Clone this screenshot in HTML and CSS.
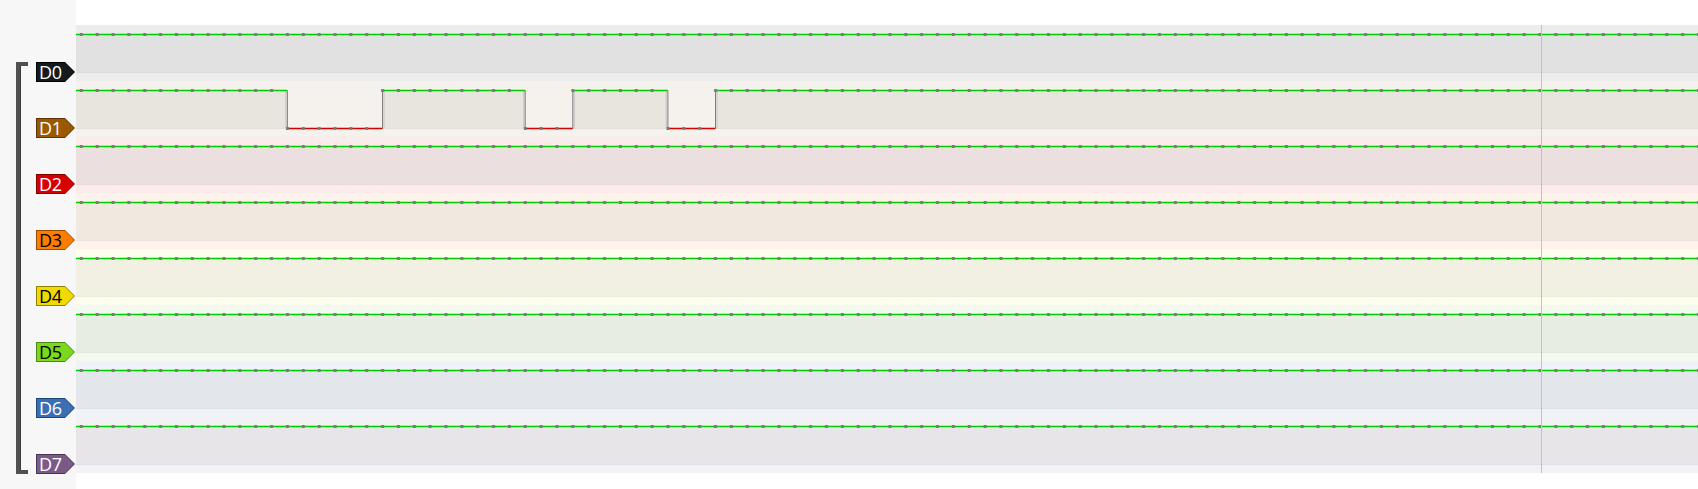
FILE: index.html
```html
<!DOCTYPE html>
<html>
<head>
<meta charset="utf-8">
<link rel="stylesheet" href="styles.css">
</head>
<body>
<svg class="defs" width="0" height="0">
  <defs>
    <pattern id="dots" patternUnits="userSpaceOnUse" x="0" y="0" width="15.855" height="56">
      <rect x="3.8" y="8" width="3" height="3" fill="#7a7a7a"/>
      <rect x="3.8" y="46" width="3" height="3" fill="#7a7a7a"/>
    </pattern>
  </defs>
</svg>
<div class="app">
  <aside class="side">
    <div class="group">
      <div class="bracket"></div>
      <div class="tags">
        <div class="tag t0"><span>D0</span></div>
        <div class="tag t1"><span>D1</span></div>
        <div class="tag t2"><span>D2</span></div>
        <div class="tag t3"><span>D3</span></div>
        <div class="tag t4"><span>D4</span></div>
        <div class="tag t5"><span>D5</span></div>
        <div class="tag t6"><span>D6</span></div>
        <div class="tag t7"><span>D7</span></div>
      </div>
    </div>
  </aside>
  <main class="main">
    <div class="rows">
      <div class="row r0">
        <svg class="wave" width="1622" height="56">
          <rect class="bg" width="1622" height="56"/>
          <rect class="fill" y="10" width="1622" height="37"/>
          <rect class="edge" y="47" width="1622" height="1"/>
          <line class="hi" x1="0" y1="9.5" x2="1622" y2="9.5"/>
          <rect y="8" width="1622" height="3" fill="url(#dots)"/>
        </svg>
      </div>
      <div class="row r1">
        <svg class="wave" width="1622" height="56">
          <rect class="bg" width="1622" height="56"/>
          <rect class="fill" x="0" y="10" width="211.4" height="37"/>
          <rect class="fill" x="306.5" y="10" width="142.7" height="37"/>
          <rect class="fill" x="496.8" y="10" width="95.1" height="37"/>
          <rect class="fill" x="639.5" y="10" width="982.5" height="37"/>
          <rect class="edge" x="0" y="47" width="211.4" height="1"/>
          <rect class="edge" x="306.5" y="47" width="142.7" height="1"/>
          <rect class="edge" x="496.8" y="47" width="95.1" height="1"/>
          <rect class="edge" x="639.5" y="47" width="982.5" height="1"/>
          <line class="shade" x1="209.9" y1="10" x2="209.9" y2="47"/>
          <line class="shade" x1="308" y1="10" x2="308" y2="47"/>
          <line class="shade" x1="447.7" y1="10" x2="447.7" y2="47"/>
          <line class="shade" x1="498.3" y1="10" x2="498.3" y2="47"/>
          <line class="shade" x1="590.4" y1="10" x2="590.4" y2="47"/>
          <line class="shade" x1="641" y1="10" x2="641" y2="47"/>
          <line class="edgeline" x1="211.4" y1="9.5" x2="211.4" y2="47.5"/>
          <line class="edgeline" x1="306.5" y1="9.5" x2="306.5" y2="47.5"/>
          <line class="edgeline" x1="449.2" y1="9.5" x2="449.2" y2="47.5"/>
          <line class="edgeline" x1="496.8" y1="9.5" x2="496.8" y2="47.5"/>
          <line class="edgeline" x1="591.9" y1="9.5" x2="591.9" y2="47.5"/>
          <line class="edgeline" x1="639.5" y1="9.5" x2="639.5" y2="47.5"/>
          <line class="hi" x1="0" y1="9.5" x2="211.4" y2="9.5"/>
          <line class="hi" x1="306.5" y1="9.5" x2="449.2" y2="9.5"/>
          <line class="hi" x1="496.8" y1="9.5" x2="591.9" y2="9.5"/>
          <line class="hi" x1="639.5" y1="9.5" x2="1622" y2="9.5"/>
          <line class="lo" x1="211.4" y1="47.5" x2="306.5" y2="47.5"/>
          <line class="lo" x1="449.2" y1="47.5" x2="496.8" y2="47.5"/>
          <line class="lo" x1="591.9" y1="47.5" x2="639.5" y2="47.5"/>
          <rect x="0" y="8" width="209.4" height="3" fill="url(#dots)"/>
          <rect x="304.5" y="8" width="142.7" height="3" fill="url(#dots)"/>
          <rect x="494.8" y="8" width="95.1" height="3" fill="url(#dots)"/>
          <rect x="637.5" y="8" width="984.5" height="3" fill="url(#dots)"/>
          <rect x="209.4" y="46" width="95.1" height="3" fill="url(#dots)"/>
          <rect x="447.2" y="46" width="47.6" height="3" fill="url(#dots)"/>
          <rect x="589.9" y="46" width="47.6" height="3" fill="url(#dots)"/>
        </svg>
      </div>
      <div class="row r2">
        <svg class="wave" width="1622" height="56">
          <rect class="bg" width="1622" height="56"/>
          <rect class="fill" y="10" width="1622" height="37"/>
          <rect class="edge" y="47" width="1622" height="1"/>
          <line class="hi" x1="0" y1="9.5" x2="1622" y2="9.5"/>
          <rect y="8" width="1622" height="3" fill="url(#dots)"/>
        </svg>
      </div>
      <div class="row r3">
        <svg class="wave" width="1622" height="56">
          <rect class="bg" width="1622" height="56"/>
          <rect class="fill" y="10" width="1622" height="37"/>
          <rect class="edge" y="47" width="1622" height="1"/>
          <line class="hi" x1="0" y1="9.5" x2="1622" y2="9.5"/>
          <rect y="8" width="1622" height="3" fill="url(#dots)"/>
        </svg>
      </div>
      <div class="row r4">
        <svg class="wave" width="1622" height="56">
          <rect class="bg" width="1622" height="56"/>
          <rect class="fill" y="10" width="1622" height="37"/>
          <rect class="edge" y="47" width="1622" height="1"/>
          <line class="hi" x1="0" y1="9.5" x2="1622" y2="9.5"/>
          <rect y="8" width="1622" height="3" fill="url(#dots)"/>
        </svg>
      </div>
      <div class="row r5">
        <svg class="wave" width="1622" height="56">
          <rect class="bg" width="1622" height="56"/>
          <rect class="fill" y="10" width="1622" height="37"/>
          <rect class="edge" y="47" width="1622" height="1"/>
          <line class="hi" x1="0" y1="9.5" x2="1622" y2="9.5"/>
          <rect y="8" width="1622" height="3" fill="url(#dots)"/>
        </svg>
      </div>
      <div class="row r6">
        <svg class="wave" width="1622" height="56">
          <rect class="bg" width="1622" height="56"/>
          <rect class="fill" y="10" width="1622" height="37"/>
          <rect class="edge" y="47" width="1622" height="1"/>
          <line class="hi" x1="0" y1="9.5" x2="1622" y2="9.5"/>
          <rect y="8" width="1622" height="3" fill="url(#dots)"/>
        </svg>
      </div>
      <div class="row r7">
        <svg class="wave" width="1622" height="56">
          <rect class="bg" width="1622" height="56"/>
          <rect class="fill" y="10" width="1622" height="37"/>
          <rect class="edge" y="47" width="1622" height="1"/>
          <line class="hi" x1="0" y1="9.5" x2="1622" y2="9.5"/>
          <rect y="8" width="1622" height="3" fill="url(#dots)"/>
        </svg>
      </div>
      <div class="cursor"></div>
    </div>
  </main>
</div>
</body>
</html>
```

FILE: styles.css
```css
html, body {
  margin: 0;
  padding: 0;
  background: #ffffff;
  width: 1698px;
  height: 489px;
  overflow: hidden;
}

.defs {
  display: block;
  width: 0;
  height: 0;
  overflow: hidden;
}

.app {
  display: flex;
  height: 489px;
}

.side {
  width: 76px;
  flex: none;
  background: #f7f7f7;
  box-sizing: border-box;
  padding: 62px 0 0 16px;
}

.group {
  display: flex;
}

.bracket {
  width: 12px;
  box-sizing: border-box;
  border: 4px solid #505050;
  border-right: 0;
  box-shadow: inset 1px 0 0 #3a3a3a;
}

.tags {
  display: flex;
  flex-direction: column;
  gap: 36px;
  margin-left: 8px;
}

.tag {
  width: 39px;
  height: 20px;
  box-sizing: border-box;
  padding: 1px;
  clip-path: polygon(0 0, 29px 0, 39px 10px, 29px 20px, 0 20px);
}

.tag span {
  display: block;
  height: 18px;
  box-sizing: border-box;
  padding-left: 2px;
  clip-path: polygon(0 0, 28px 0, 37px 9px, 28px 18px, 0 18px);
  font-family: "Open Sans", "Noto Sans", sans-serif;
  font-size: 18px;
  line-height: 18px;
  letter-spacing: -0.4px;
  color: #ffffff;
}

.t0 { background: #000000; }
.t0 span { background: #161a1c; }
.t1 { background: #5e3500; }
.t1 span { background: #9a5800; }
.t2 { background: #860000; }
.t2 span { background: #d50000; }
.t3 { background: #9a4c00; }
.t3 span { background: #ff7c00; color: #000; }
.t4 { background: #8f8200; }
.t4 span { background: #f0da00; color: #000; }
.t5 { background: #4b8a12; }
.t5 span { background: #7ad81d; color: #000; }
.t6 { background: #1f4578; }
.t6 span { background: #3b6fb3; }
.t7 { background: #4a3456; }
.t7 span { background: #7a5a88; }

.main {
  flex: 1;
  padding-top: 25px;
}

.rows {
  position: relative;
  display: flex;
  flex-direction: column;
}

.wave {
  display: block;
}

.hi { stroke: #00cc00; stroke-width: 1.3; }
.lo { stroke: #d40000; stroke-width: 1.3; }
.edgeline { stroke: #7f7f7f; stroke-width: 1; }
.shade { stroke: #c8c8c8; stroke-width: 1.5; opacity: 0.8; }

.r0 .bg { fill: #ececec; }
.r0 .fill { fill: #e1e1e1; }
.r0 .edge { fill: #dadada; }

.r1 .bg { fill: #f5f1ec; }
.r1 .fill { fill: #e8e5df; }
.r1 .edge { fill: #e1ded8; }

.r2 .bg { fill: #fbebea; }
.r2 .fill { fill: #ecdfdf; }
.r2 .edge { fill: #e6d9d9; }

.r3 .bg { fill: #fdf3ea; }
.r3 .fill { fill: #f1e9df; }
.r3 .edge { fill: #ebe3d9; }

.r4 .bg { fill: #fdfdee; }
.r4 .fill { fill: #f1f0e2; }
.r4 .edge { fill: #ebeadc; }

.r5 .bg { fill: #f2f9ee; }
.r5 .fill { fill: #e7ede2; }
.r5 .edge { fill: #e0e7dc; }

.r6 .bg { fill: #eff2f7; }
.r6 .fill { fill: #e3e6eb; }
.r6 .edge { fill: #dde0e6; }

.r7 .bg { fill: #f2f1f3; }
.r7 .fill { fill: #e7e5e8; }
.r7 .edge { fill: #e0dee2; }

.cursor {
  position: absolute;
  left: 1465px;
  top: 0;
  bottom: 0;
  width: 1px;
  background: #c2c2c2;
}
```
